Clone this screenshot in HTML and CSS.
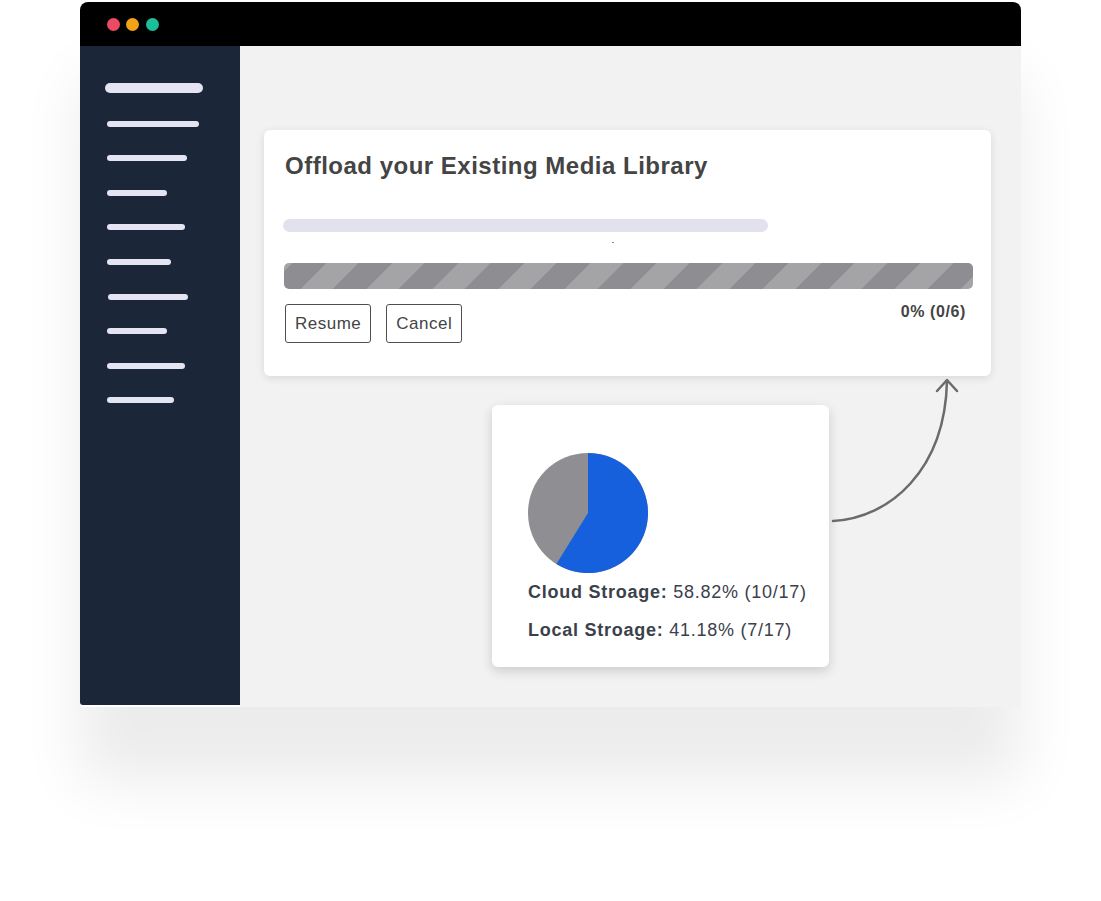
FILE: index.html
```html
<!DOCTYPE html>
<html lang="en">
<head>
<meta charset="utf-8">
<title>Offload Media Library</title>
<link rel="stylesheet" href="styles.css">
</head>
<body>
<div class="window">
  <div class="titlebar">
    <span class="dot dot-red"></span>
    <span class="dot dot-orange"></span>
    <span class="dot dot-teal"></span>
  </div>
  <div class="main">
    <nav class="sidebar">
      <span class="nav-line nav-line-lead" style="width:98px"></span>
      <span class="nav-line" style="width:92px"></span>
      <span class="nav-line" style="width:80px"></span>
      <span class="nav-line" style="width:60px"></span>
      <span class="nav-line" style="width:78px"></span>
      <span class="nav-line" style="width:64px"></span>
      <span class="nav-line nav-line-shift" style="width:80px"></span>
      <span class="nav-line" style="width:60px"></span>
      <span class="nav-line" style="width:78px"></span>
      <span class="nav-line" style="width:67px"></span>
    </nav>
    <section class="content">
      <div class="card offload">
        <h1 class="offload-title">Offload your Existing Media Library</h1>
        <div class="track"></div>
        <div class="speck-row"><span class="speck"></span></div>
        <div class="stripes"></div>
        <div class="controls">
          <div class="buttons">
            <button class="btn">Resume</button>
            <button class="btn">Cancel</button>
          </div>
          <span class="pct">0% (0/6)</span>
        </div>
      </div>
      <div class="card storage">
        <svg class="pie" width="120" height="120" viewBox="0 0 120 120">
          <circle cx="60" cy="60" r="60" fill="#8e8e93"/>
          <path d="M60 60 L60 0 A60 60 0 1 1 28.42 111.02 Z" fill="#1660de"/>
        </svg>
        <p class="stat"><b>Cloud Stroage:</b> 58.82% (10/17)</p>
        <p class="stat"><b>Local Stroage:</b> 41.18% (7/17)</p>
      </div>
      <svg class="arrow" width="150" height="160" viewBox="0 0 150 160">
        <path d="M13 151 C 70 148, 125 100, 127 11" fill="none" stroke="#6b6b6b" stroke-width="2.5" stroke-linecap="round"/>
        <path d="M117 21 L127 10 L137 21" fill="none" stroke="#6b6b6b" stroke-width="2.5" stroke-linecap="round" stroke-linejoin="round"/>
      </svg>
    </section>
  </div>
</div>
</body>
</html>
```

FILE: styles.css
```css
* {
  box-sizing: border-box;
}

html, body {
  margin: 0;
  padding: 0;
  background: #ffffff;
}

body {
  font-family: "Liberation Sans", Arial, Helvetica, sans-serif;
  width: 1101px;
  height: 901px;
  overflow: hidden;
}

.window {
  margin: 2px 0 0 80px;
  width: 941px;
  border-radius: 8px 8px 4px 4px;
  box-shadow: 0 75px 60px rgba(0, 0, 0, 0.08);
}

.titlebar {
  height: 44px;
  background: #000000;
  border-radius: 8px 8px 0 0;
  display: flex;
  align-items: center;
  gap: 6.5px;
  padding-left: 26.5px;
}

.dot {
  width: 13px;
  height: 13px;
  border-radius: 50%;
}

.dot-red { background: #ec4a63; }
.dot-orange { background: #f4a11a; }
.dot-teal { background: #1bbf9a; }

.main {
  display: flex;
  height: 661px;
}

.sidebar {
  width: 160px;
  flex: 0 0 160px;
  background: #1c2639;
  display: flex;
  flex-direction: column;
  align-items: flex-start;
  padding: 37px 0 0 27px;
  gap: 28.6px;
  border-bottom-left-radius: 3px;
  margin-bottom: 2px;
}

.nav-line {
  display: block;
  height: 6px;
  border-radius: 3px;
  background: #e4e4f2;
}

.nav-line-lead {
  height: 10px;
  border-radius: 5px;
  margin-left: -2px;
  margin-bottom: -1px;
}

.nav-line-shift {
  margin-left: 1px;
}

.content {
  position: relative;
  flex: 1;
  background: #f2f2f2;
  padding: 84px 0 0 24px;
}

.card {
  background: #ffffff;
  border-radius: 6px;
}

.offload {
  width: 727px;
  padding: 22px 18px 33px 20px;
  box-shadow: 0 2px 8px rgba(0, 0, 0, 0.11);
}

.offload-title {
  margin: 0 0 0 1px;
  font-size: 24px;
  line-height: 28px;
  font-weight: bold;
  letter-spacing: 0.5px;
  color: #444444;
}

.track {
  margin: 39px 0 0 -1px;
  width: 485px;
  height: 13px;
  border-radius: 7px;
  background: #e2e1ee;
}

.speck-row {
  height: 31px;
  position: relative;
}

.speck {
  position: absolute;
  left: 328px;
  top: 10px;
  width: 2px;
  height: 1px;
  background: #8a8a8a;
}

.stripes {
  height: 26px;
  border-radius: 5px;
  background: repeating-linear-gradient(135deg,
    #a4a4a6 0 6.36px,
    #8e8e92 6.36px 29.7px,
    #a4a4a6 29.7px 46.67px);
}

.controls {
  margin-top: 15px;
  display: flex;
  justify-content: space-between;
  align-items: flex-start;
}

.buttons {
  display: flex;
  gap: 15px;
  margin-left: 1px;
}

.btn {
  height: 39px;
  padding: 0 9px;
  border: 1px solid #4f4f4f;
  border-radius: 3px;
  background: #ffffff;
  font-family: "Liberation Sans", Arial, Helvetica, sans-serif;
  font-size: 17px;
  letter-spacing: 0.5px;
  color: #444444;
  display: flex;
  align-items: center;
}

.pct {
  margin: -2.5px 7px 0 0;
  font-size: 16px;
  line-height: 20px;
  font-weight: bold;
  letter-spacing: 0.6px;
  color: #444444;
}

.storage {
  width: 337px;
  margin: 29px 0 0 228px;
  padding: 48px 10px 18px 36px;
  box-shadow: 0 4px 12px rgba(0, 0, 0, 0.16);
}

.pie {
  display: block;
}

.stat {
  margin: 0;
  font-size: 18px;
  line-height: 38px;
  letter-spacing: 0.75px;
  color: #3b414b;
  white-space: nowrap;
}

.arrow {
  position: absolute;
  left: 580px;
  top: 324px;
}
```
